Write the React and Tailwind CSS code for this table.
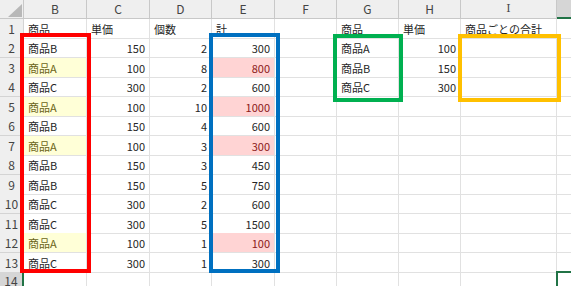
import React from 'react';

const FONT = { fontFamily: '"Noto Sans CJK JP", "Noto Sans", sans-serif' };

const COLS = ['B', 'C', 'D', 'E', 'F', 'G', 'H', 'I', 'J'];

// 行データ: [B, C, D, E, G, H, I]
const ROWS = [
  ['商品', '単価', '個数', '計', '商品', '単価', '商品ごとの合計'],
  ['商品B', 150, 2, 300, '商品A', 100, ''],
  ['商品A', 100, 8, 800, '商品B', 150, ''],
  ['商品C', 300, 2, 600, '商品C', 300, ''],
  ['商品A', 100, 10, 1000, '', '', ''],
  ['商品B', 150, 4, 600, '', '', ''],
  ['商品A', 100, 3, 300, '', '', ''],
  ['商品B', 150, 3, 450, '', '', ''],
  ['商品B', 150, 5, 750, '', '', ''],
  ['商品C', 300, 2, 600, '', '', ''],
  ['商品C', 300, 5, 1500, '', '', ''],
  ['商品A', 100, 1, 100, '', '', ''],
  ['商品C', 300, 1, 300, '', '', ''],
];

const GRID = 'grid grid-cols-[24px_63px_63px_62px_63px_62px_62px_62px_96px_60px]';

function Cell({ children, tone }) {
  const right = typeof children === 'number';
  const fill =
    tone === 'yellow'
      ? 'bg-[#ffffd7] text-[#6b6418]'
      : tone === 'red'
        ? 'bg-[#ffd4d4] text-[#8c1a1a]'
        : 'text-[#262626]';
  return (
    <div
      className={`flex items-center pt-px border-r border-b border-[#e1e1e1] text-[11px] leading-none whitespace-nowrap overflow-visible ${fill} ${
        right ? 'justify-end pr-[4px]' : 'pl-[4px]'
      }`}
    >
      {children}
    </div>
  );
}

function Sheet() {
  return (
    <div className="relative w-[571px] h-[286px] overflow-hidden bg-white" style={FONT}>
      {/* 列見出し */}
      <div className={`${GRID} h-[19px]`}>
        <div className="relative bg-[#efefef] border-r border-b border-[#c8c8c8]">
          <svg className="absolute left-[8px] top-[4px]" width="14" height="13" viewBox="0 0 14 13">
            <polygon points="14,0 14,13 0,13" fill="#b8b8b8" />
          </svg>
        </div>
        {COLS.map((c) => (
          <div
            key={c}
            className={`flex items-center justify-center text-[12px] text-[#444] border-r ${
              c === 'J'
                ? 'bg-[#d6d6d6] border-b-2 border-b-[#217346] border-r-[#c8c8c8]'
                : 'bg-[#efefef] border-b border-[#c8c8c8]'
            }`}
            style={c === 'I' ? { fontFamily: '"DejaVu Serif", serif', fontSize: 11 } : undefined}
          >
            {c === 'J' ? '' : c}
          </div>
        ))}
      </div>

      {ROWS.map((r, i) => {
        const isA = i > 0 && r[0] === '商品A';
        return (
          <div key={i} className={`${GRID} ${i % 2 ? 'h-[20px]' : 'h-[19px]'}`}>
            <div className="flex items-center justify-center pt-px bg-[#efefef] border-r border-b border-[#d4d4d4] text-[12px] text-[#444]">
              {i + 1}
            </div>
            <Cell tone={isA ? 'yellow' : null}>{r[0]}</Cell>
            <Cell>{r[1]}</Cell>
            <Cell>{r[2]}</Cell>
            <Cell tone={isA ? 'red' : null}>{r[3]}</Cell>
            <Cell />
            <Cell>{r[4]}</Cell>
            <Cell>{r[5]}</Cell>
            <Cell>{r[6]}</Cell>
            <Cell />
          </div>
        );
      })}

      {/* 14行目 */}
      <div className={`${GRID} h-[20px]`}>
        <div className="flex items-start justify-center pt-[3px] bg-[#d6d6d6] border-r-2 border-r-[#217346] border-b border-[#d4d4d4] text-[12px] leading-none text-[#444]">
          14
        </div>
        {COLS.map((c) => (
          <Cell key={c} />
        ))}
      </div>

      {/* 選択セル J14 */}
      <div className="absolute left-[556px] top-[271px] w-[40px] h-[30px] border-2 border-[#217346]" />

      {/* 囲み枠 */}
      <div className="absolute left-[20px] top-[33px] w-[71px] h-[240px] border-4 border-[#ff0000]" />
      <div className="absolute left-[209px] top-[33px] w-[71px] h-[240px] border-4 border-[#0070c0]" />
      <div className="absolute left-[333px] top-[34px] w-[70px] h-[68px] border-4 border-[#00b050]" />
      <div className="absolute left-[458px] top-[34px] w-[103px] h-[68px] border-4 border-[#ffc000]" />
    </div>
  );
}

export default function App() {
  return <Sheet />;
}
